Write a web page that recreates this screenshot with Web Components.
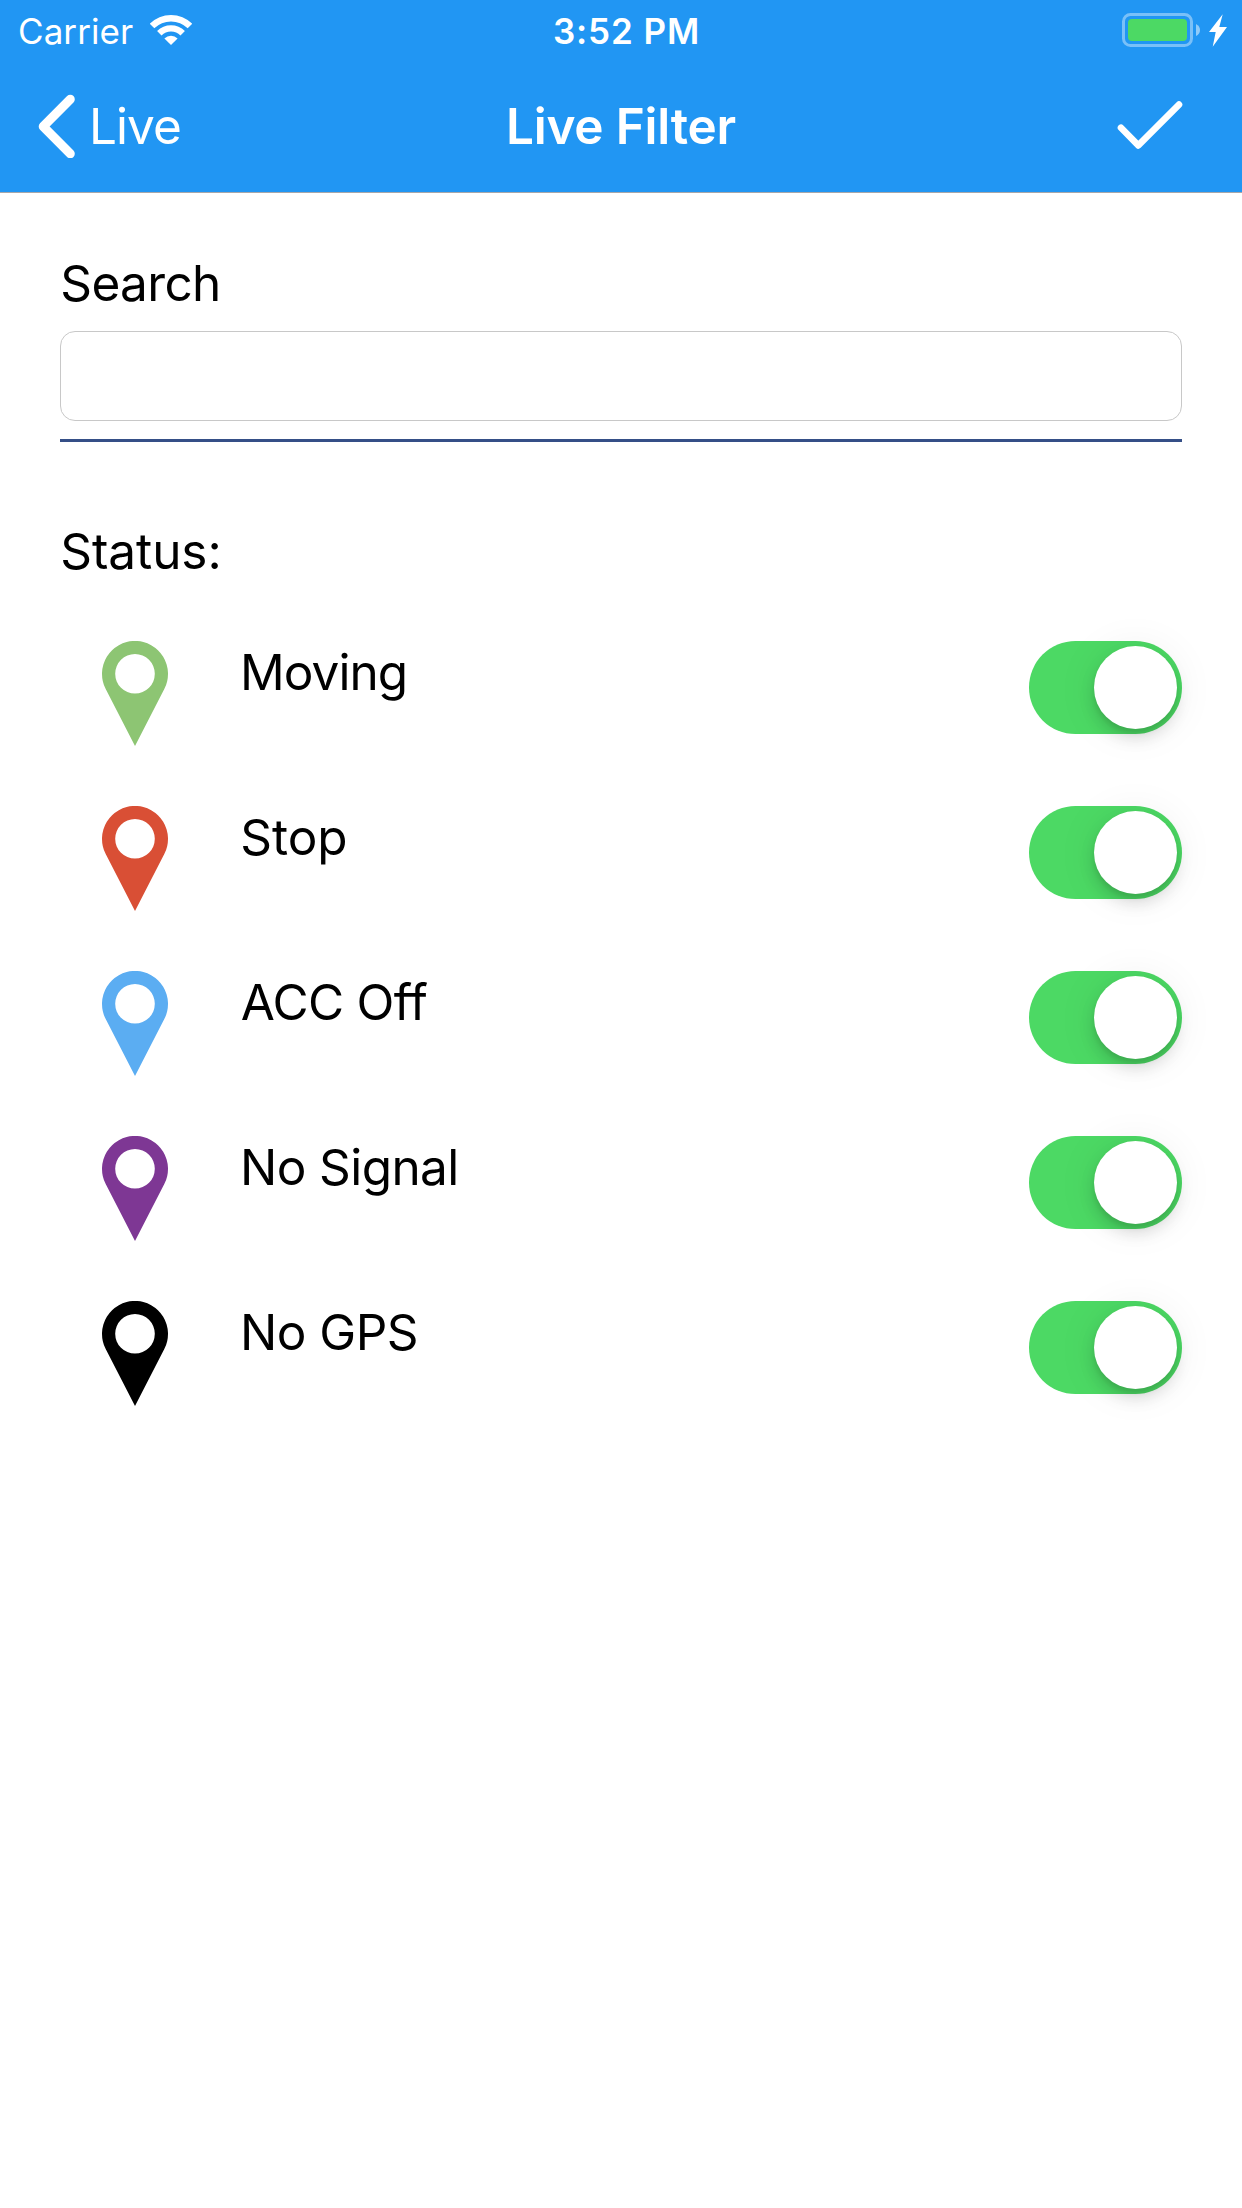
<!DOCTYPE html>
<html lang="en">
<head>
<meta charset="utf-8">
<title>Live Filter</title>
<style>
  html, body { margin: 0; background: #fff; }
  body { font-family: Inter, "Liberation Sans", sans-serif; color: #000; }
</style>
</head>
<body>
<filter-screen>
  <status-bar slot="top" carrier="Carrier" time="3:52 PM"></status-bar>
  <nav-bar slot="top" back="Live">Live Filter</nav-bar>
  <search-field label="Search"></search-field>
  <status-list label="Status:">
    <status-row color="#8dc573" style="--track:-.956px">Moving</status-row>
    <status-row color="#d94f35" style="--track:-.05px;--nudge:.3px">Stop</status-row>
    <status-row color="#5badf2" style="--track:-.7px;--nudge:.7px">ACC Off</status-row>
    <status-row color="#7e3794" style="--track:-.6px">No Signal</status-row>
    <status-row color="#000000" style="--track:-.549px">No GPS</status-row>
  </status-list>
</filter-screen>

<script>
  const define = (name, render) => customElements.define(name, class extends HTMLElement {
    constructor() {
      super();
      this.attachShadow({ mode: 'open' });
    }
    connectedCallback() {
      this.shadowRoot.innerHTML = render(this);
    }
  });

  define('filter-screen', () => `
    <style>
      :host { display: flex; flex-direction: column; width: 1242px; height: 2208px; background: #fff; }
      header { background: #2196f3; border-bottom: 1px solid #a7a7aa; }
      main { display: flex; flex-direction: column; gap: 79px; padding: 60px 60px 0; }
    </style>
    <header><slot name="top"></slot></header>
    <main><slot></slot></main>`);

  define('wifi-icon', () => `
    <style>:host { display: block; width: 42px; height: 30px; } svg { display: block; }</style>
    <svg width="42" height="30" viewBox="0 0 42 30" fill="#fff">
      <path d="M-.2 8.8A30 30 0 0 1 42.2 8.8L37.7 13.3A23.6 23.6 0 0 0 4.3 13.3Z"/>
      <path d="M7.1 16.1A19.7 19.7 0 0 1 34.9 16.1L30.5 20.5A13.4 13.4 0 0 0 11.5 20.5Z"/>
      <path d="M14.4 23.4A9.3 9.3 0 0 1 27.6 23.4L21 30Z"/>
    </svg>`);

  define('battery-icon', () => `
    <style>:host { display: block; width: 106px; height: 34px; } svg { display: block; }</style>
    <svg width="106" height="34" viewBox="0 0 106 34">
      <rect x="1.5" y="1.5" width="68" height="31" rx="7" fill="none" stroke="#fff" stroke-opacity=".4" stroke-width="3"/>
      <rect x="6" y="6" width="59" height="22" rx="4" fill="#4cd964"/>
      <path d="M74 11Q78 13 78 17Q78 21 74 23Z" fill="#fff" fill-opacity=".5"/>
      <path d="M100.7 1.3L97.3 14H105L90.7 33.7L93.7 19H87Z" fill="#fff"/>
    </svg>`);

  define('status-bar', el => `
    <style>
      :host { display: grid; grid-template-columns: 1fr auto 1fr; align-items: center; height: 60px; color: #fff; font-size: 35px; line-height: 58px; }
      .left, .right { display: flex; align-items: center; }
      .left { padding-left: 18px; gap: 17px; letter-spacing: .075px; }
      .right { justify-content: flex-end; padding-right: 14px; }
      .text { padding-top: 2px; }
      .time { padding-left: 11px; font-weight: 600; letter-spacing: .893px; }
    </style>
    <div class="left"><span class="text">${el.getAttribute('carrier')}</span><wifi-icon></wifi-icon></div>
    <span class="text time">${el.getAttribute('time')}</span>
    <div class="right"><battery-icon></battery-icon></div>`);

  define('nav-bar', el => `
    <style>
      :host { display: grid; grid-template-columns: 1fr auto 1fr; align-items: center; height: 132px; color: #fff; font-size: 49.5px; line-height: 60px; }
      .back, .done { display: flex; align-items: center; }
      .back { padding-left: 38px; gap: 14px; letter-spacing: -.943px; }
      .done { justify-content: flex-end; padding-right: 59px; }
      .title { font-weight: 600; letter-spacing: -.212px; }
      svg { display: block; }
    </style>
    <div class="back">
      <svg width="37" height="64" viewBox="0 0 37 64" fill="none" stroke="#fff" stroke-width="9" stroke-linecap="round" stroke-linejoin="round"><path d="M32.3 5.3L5.2 32.5L32.3 59.7"/></svg>
      <span>${el.getAttribute('back')}</span>
    </div>
    <span class="title"><slot></slot></span>
    <div class="done">
      <svg width="66" height="50" viewBox="0 0 66 50" fill="none" stroke="#fff" stroke-width="6.6" stroke-linecap="round" stroke-linejoin="round"><path d="M4 26.7L21.3 44.4L62 3.6"/></svg>
    </div>`);

  define('search-field', el => `
    <style>
      :host { display: flex; flex-direction: column; border-bottom: 3px solid #354f87; padding-bottom: 18px; }
      label { padding-left: .3px; font-size: 49.5px; line-height: 60px; letter-spacing: -.65px; }
      input { box-sizing: border-box; width: 100%; height: 90px; margin: 18px 0 0; padding: 0 21px; border: 1px solid #c8c8c8; border-radius: 15px; background: #fff; font: inherit; font-size: 49.5px; outline: none; }
    </style>
    <label for="q">${el.getAttribute('label')}</label>
    <input id="q" type="text">`);

  define('status-list', el => `
    <style>
      :host { display: flex; flex-direction: column; gap: 60px; }
      h2 { margin: 0; padding-left: .3px; font-size: 49.5px; font-weight: 400; line-height: 60px; letter-spacing: -.08px; }
      .rows { display: flex; flex-direction: column; gap: 60px; }
    </style>
    <h2>${el.getAttribute('label')}</h2>
    <div class="rows"><slot></slot></div>`);

  define('map-pin', el => `
    <style>:host { display: block; width: 66px; height: 105px; } svg { display: block; }</style>
    <svg width="66" height="105" viewBox="0 0 66 105">
      <path fill="${el.getAttribute('color')}" fill-rule="evenodd" d="M33 105L3.7 48.1A33 33 0 1 1 62.3 48.1ZM33 13a19.8 19.8 0 1 0 0 39.6a19.8 19.8 0 1 0 0-39.6Z"/>
    </svg>`);

  define('toggle-switch', () => `
    <style>
      :host { display: flex; justify-content: flex-end; align-items: center; box-sizing: border-box; width: 153px; height: 93px; padding: 5px; border-radius: 46.5px; background: #4cd964; }
      i { width: 83px; height: 83px; border-radius: 50%; background: #fff; box-shadow: 0 2px 44px rgba(0,0,0,.07), 0 9px 16px rgba(0,0,0,.13), 0 4px 5px rgba(0,0,0,.08); }
    </style>
    <i></i>`);

  define('status-row', el => `
    <style>
      :host { display: flex; align-items: flex-start; height: 105px; padding-left: 42px; font-size: 49.5px; line-height: 60px; }
      .label { flex: 1; padding: 1px 0 0 calc(72px + var(--nudge, 0px)); letter-spacing: var(--track, 0); font-variant-ligatures: none; }
    </style>
    <map-pin color="${el.getAttribute('color')}"></map-pin>
    <span class="label"><slot></slot></span>
    <toggle-switch></toggle-switch>`);
</script>
</body>
</html>
